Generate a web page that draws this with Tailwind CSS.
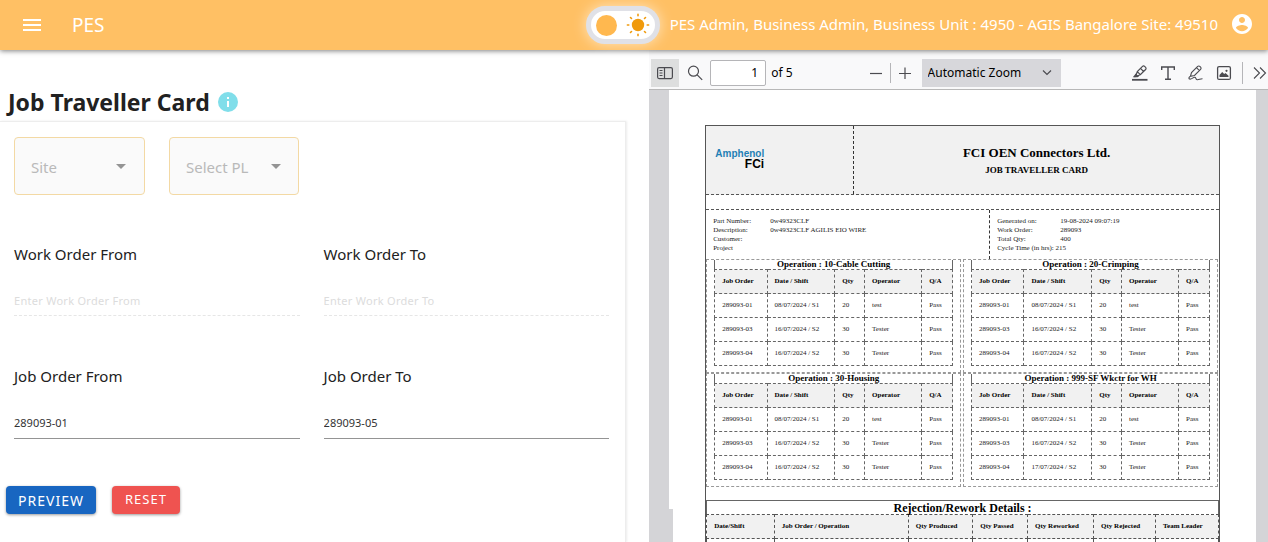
<!DOCTYPE html>
<html lang="en">
<head>
<meta charset="utf-8">
<title>PES - Job Traveller Card</title>
<script src="https://cdn.jsdelivr.net/npm/@tailwindcss/browser@4"></script>
</head>
<body class="h-screen overflow-hidden bg-white flex flex-col font-['Noto_Sans',sans-serif] text-[#212121]">

<header class="h-[50px] shrink-0 bg-[#ffc064] text-white flex items-center pl-5 pr-[14px] relative z-10 shadow-[0_1px_5px_rgba(0,0,0,0.5)]">
  <button class="size-6" aria-label="Menu">
    <svg viewBox="0 0 24 24" class="size-6" fill="currentColor"><path d="M3 18h18v-2H3v2zm0-5h18v-2H3v2zm0-7v2h18V6H3z"/></svg>
  </button>
  <a href="#" class="ml-7 text-[19px] leading-6">PES</a>
  <button role="switch" aria-checked="false" aria-label="Dark mode" class="ml-auto w-[74px] h-[38px] rounded-full border-[5px] border-[#e0e1e7] bg-white shadow-[0_0_14px_rgba(255,255,255,0.6)] flex items-center justify-between px-[5px]">
    <span class="size-[21px] rounded-full bg-[#ffb84f]"></span>
    <svg viewBox="0 0 24 24" class="size-6" fill="#f09a0c"><circle cx="12" cy="12" r="6.2"/><g stroke="#f09a0c" stroke-width="1.6" stroke-linecap="round"><path d="M12 1.4v1.4M12 21.2v1.4M1.4 12h1.4M21.2 12h1.4M4.5 4.5l1 1M18.5 18.500l1 1M4.500 19.500l1-1M18.500 5.500l1-1"/></g></svg>
  </button>
  <span class="ml-[10px] pb-[2px] text-[15px] leading-6 whitespace-nowrap">PES Admin, Business Admin, Business Unit : 4950 - AGIS Bangalore Site: 49510</span>
  <button class="ml-3 size-6 mb-[2px] shrink-0" aria-label="Account">
    <svg viewBox="0 0 24 24" class="size-6" fill="currentColor"><path d="M12 2C6.480 2 2 6.480 2 12s4.480 10 10 10 10-4.480 10-10S17.520 2 12 2zm0 3c1.660 0 3 1.340 3 3s-1.340 3-3 3-3-1.340-3-3 1.340-3 3-3zm0 14.200c-2.500 0-4.710-1.280-6-3.220.030-1.990 4-3.080 6-3.080 1.990 0 5.970 1.090 6 3.080-1.290 1.940-3.500 3.220-6 3.220z"/></svg>
  </button>
</header>

<main class="flex-1 min-h-0 flex">
  <section class="w-[51.2%] shrink-0 pr-[23px] flex flex-col">
    <div class="h-[71px] pt-8 pl-2 flex items-center gap-2">
      <h1 class="text-[23px] leading-8 font-bold">Job Traveller Card</h1>
      <svg viewBox="0 0 20 20" class="size-5" role="img" aria-label="Information"><circle cx="10" cy="10" r="10" fill="#80deea"/><path d="M9 5h2v2H9zM9 9h2v6H9z" fill="#fff"/></svg>
    </div>
    <form class="flex-1 border-t border-r border-[#ededed] shadow-[1px_0_2px_rgba(0,0,0,0.08)] pt-[15px]" onsubmit="return false">
      <div class="flex gap-6 pl-[14px]">
        <div class="relative w-[131px]">
          <select aria-label="Site" class="appearance-none w-full h-[58px] rounded border border-[#f3d9a4] bg-[#fafafa] pl-4 pt-[2px] text-[15px] text-[#b9b9b9]"><option>Site</option></select>
          <svg viewBox="0 0 10 5" class="absolute right-[19px] top-[27px] w-[10px] h-[5px]" fill="#949494"><path d="M0 0h10L5 5z"/></svg>
        </div>
        <div class="relative w-[130px]">
          <select aria-label="Select PL" class="appearance-none w-full h-[58px] rounded border border-[#f3d9a4] bg-[#fafafa] pl-4 pt-[2px] text-[15px] text-[#b9b9b9]"><option>Select PL</option></select>
          <svg viewBox="0 0 10 5" class="absolute right-[18px] top-[27px] w-[10px] h-[5px]" fill="#949494"><path d="M0 0h10L5 5z"/></svg>
        </div>
      </div>
      <div class="grid grid-cols-2 gap-x-6 gap-y-12 pt-[47px] pl-[14px] pr-4">
        <div>
          <label for="wf" class="block text-[15px] leading-6">Work Order From</label>
          <input id="wf" placeholder="Enter Work Order From" disabled class="mt-5 block w-full h-[30px] pb-px border-b border-dashed border-[#e6e6e6] text-[11px] tracking-wide placeholder:text-[#dcdcdc]">
        </div>
        <div>
          <label for="wt" class="block text-[15px] leading-6">Work Order To</label>
          <input id="wt" placeholder="Enter Work Order To" disabled class="mt-5 block w-full h-[30px] pb-px border-b border-dashed border-[#e6e6e6] text-[11px] tracking-wide placeholder:text-[#dcdcdc]">
        </div>
        <div>
          <label for="jf" class="block text-[15px] leading-6">Job Order From</label>
          <input id="jf" value="289093-01" class="mt-[21px] block w-full h-[30px] pb-[2px] border-b border-[#949494] text-[11px] text-[#333]">
        </div>
        <div>
          <label for="jt" class="block text-[15px] leading-6">Job Order To</label>
          <input id="jt" value="289093-05" class="mt-[21px] block w-full h-[30px] pb-[2px] border-b border-[#949494] text-[11px] text-[#333]">
        </div>
      </div>
      <div class="flex gap-4 pt-[47px] pl-[6px]">
        <button class="h-7 w-[90px] rounded bg-[#1866c1] text-white text-[14px] tracking-[1px] shadow-[0_1px_3px_rgba(0,0,0,0.4)]">PREVIEW</button>
        <button class="h-7 w-[68px] rounded bg-[#ef5350] text-white text-[13px] tracking-[1px] shadow-[0_1px_3px_rgba(0,0,0,0.4)]">RESET</button>
      </div>
    </form>
  </section>

  <section class="flex-1 min-w-0 flex flex-col">
    <div class="h-10 shrink-0 bg-[#f9f9fa] border-b border-[#b8b8b8] pt-[6px] pl-[2px] flex items-center text-[13px] text-black overflow-hidden">
      <button class="w-7 h-7 bg-[#dddede] grid place-items-center shrink-0" aria-label="Toggle sidebar">
        <svg viewBox="0 0 16 16" class="size-4" fill="none" stroke="#4b4b50" stroke-width="1.200"><rect x=".6" y="2.600" width="14.800" height="11" rx="1.500"/><path d="M7.500 2.600v11M2.500 5.500h3M2.500 8h3M2.500 10.500h3"/></svg>
      </button>
      <button class="w-[31px] h-7 grid place-items-center shrink-0" aria-label="Find">
        <svg viewBox="0 0 16 16" class="size-4" fill="none" stroke="#4b4b50" stroke-width="1.200"><circle cx="6.500" cy="6.200" r="5"/><path d="M10.200 9.900l5 5"/></svg>
      </button>
      <input aria-label="Page" value="1" class="w-14 h-[26px] shrink-0 border border-[#b5b5b8] rounded-[2px] bg-white text-right text-xs pr-[7px]">
      <span class="ml-[5px] whitespace-nowrap text-xs">of 5</span>
      <button class="ml-[76px] w-[14px] h-7 shrink-0 grid place-items-center" aria-label="Zoom out"><svg viewBox="0 0 12 12" class="size-3" stroke="#4b4b50" stroke-width="1.200"><path d="M0 6.500h12"/></svg></button>
      <span class="ml-[7px] w-px h-5 bg-[#b5b5b8] shrink-0"></span>
      <button class="ml-[7px] w-[14px] h-7 shrink-0 grid place-items-center" aria-label="Zoom in"><svg viewBox="0 0 12 12" class="size-3" stroke="#4b4b50" stroke-width="1.200"><path d="M0 6.500h12M6 .5v12"/></svg></button>
      <div class="relative ml-[10px] w-[139px] shrink-0">
        <select aria-label="Zoom" class="appearance-none w-full h-7 bg-[#d7d7db] pl-[6px] text-xs"><option>Automatic Zoom</option></select>
        <svg viewBox="0 0 10 6" class="absolute right-[9px] top-[11px] w-[10px] h-[6px]" fill="none" stroke="#4b4b50" stroke-width="1.200"><path d="M1 .5l4 4 4-4"/></svg>
      </div>
      <div class="ml-auto flex items-center gap-3 shrink-0 pr-[5px]">
        <button aria-label="Highlight"><svg viewBox="0 0 16 16" class="size-4 block" fill="none" stroke="#4b4b50" stroke-width="1.200"><path d="M0 14.800h15.500" stroke-width="1.800"/><path d="M3.500 11.500l1.800-4.800 5.200-5.300c.6-.6 1.500-.6 2.100 0l1 1c.6.6.6 1.500 0 2.100l-5.300 5.200zM5.300 6.700l3 3M8.500 3.400l3.100 3.100"/><path d="M.8 12.200l3-3.700L7 11.400l-1.500.8z" fill="#4b4b50" stroke="none"/></svg></button>
        <button aria-label="Text"><svg viewBox="0 0 16 16" class="size-4 block" fill="none" stroke="#4b4b50" stroke-width="1.400"><path d="M1.700 5V2h12.600v3M8 2v12M5 14.200h6"/></svg></button>
        <button aria-label="Draw"><svg viewBox="0 0 16 16" class="size-4 block" fill="none" stroke="#4b4b50" stroke-width="1.100"><path d="M2.500 11.200l1-3.700 6.200-6.100c.6-.6 1.500-.6 2.100 0l.8.8c.6.6.6 1.500 0 2.100L6.500 10.500zM8.500 2.700l2.900 2.900M2.500 11.200C1 12 .6 13 1.200 13.800c2 1.400 4-2 5.700-1.600 1.400.4.5 2.400 2.200 2.500 2 .2 3-1 5.400-.9"/></svg></button>
        <button aria-label="Image"><svg viewBox="0 0 16 16" class="size-4 block" fill="none" stroke="#4b4b50" stroke-width="1.300"><rect x="1.600" y="1.600" width="12.800" height="12.800" rx="1.500"/><path d="M3.500 12V10l2.700-3 2 2 1.300-1 3 2.800V12z" fill="#4b4b50" stroke="none"/><circle cx="10.500" cy="5.800" r="1.100" fill="#4b4b50" stroke="none"/></svg></button>
        <span class="-mx-[2px] w-px h-[22px] bg-[#b5b5b8]"></span>
        <button aria-label="More tools" class="-mr-1"><svg viewBox="0 0 14 14" class="size-[14px] block" fill="none" stroke="#4b4b50" stroke-width="1.100"><path d="M1 1.500L6.500 7 1 12.500M7 1.500L12.500 7 7 12.500"/></svg></button>
      </div>
    </div>

    <div class="flex-1 min-h-0 overflow-hidden bg-[#d4d4d7] pl-5 pr-3 relative">
      <div class="absolute left-5 top-[419px] bottom-0 w-1 bg-[#d4d4d7]"></div>
      <article class="bg-white h-full pt-[35px] pl-9 pr-9 font-['Liberation_Serif',serif] text-[7px] leading-[9px] text-[#222]">
        <div class="border border-[#555] h-[700px]">
          <div class="flex h-[69px] bg-[#f1f1f1] border-b border-dashed border-[#555]">
            <div class="w-[148px] border-r border-dashed border-[#333] pt-[23px] pl-2 font-['Liberation_Sans',sans-serif] font-bold">
              <div class="w-[50px] text-right text-[10px] leading-[10px] text-[#1f7fb5]">Amphenol</div>
              <div class="w-[50px] text-right text-[12px] leading-[11px] text-black">FCi</div>
            </div>
            <div class="flex-1 text-center text-black font-bold pt-[18px]">
              <h2 class="text-[13px] leading-[18px]">FCI OEN Connectors Ltd.</h2>
              <h3 class="text-[9px] leading-4">JOB TRAVELLER CARD</h3>
            </div>
          </div>
          <div class="h-[15px] border-b border-dashed border-[#555]"></div>
          <div class="flex h-[49px]">
            <dl class="w-[284px] border-r border-dashed border-[#333] grid grid-cols-[57px_1fr] content-start pl-[7px] pt-[7px]">
              <dt>Part Number:</dt><dd>0w49323CLF</dd>
              <dt>Description:</dt><dd>0w49323CLF AGILIS EIO WIRE</dd>
              <dt>Customer:</dt><dd></dd>
              <dt>Project</dt><dd></dd>
            </dl>
            <dl class="flex-1 grid grid-cols-[63px_1fr] content-start pl-[7px] pt-[7px] whitespace-nowrap">
              <dt>Generated on:</dt><dd>19-08-2024 09:07:19</dd>
              <dt>Work Order:</dt><dd>289093</dd>
              <dt>Total Qty:</dt><dd>400</dd>
              <dt>Cycle Time (in hrs): 215</dt><dd></dd>
            </dl>
          </div>
          <div id="ops" class="grid grid-cols-2 gap-x-[2px] pr-px"></div>
          <table class="mt-[13px] w-full table-fixed border-collapse">
            <caption class="border border-b-0 border-[#666] h-[14px] text-[12px] leading-[14px] font-bold text-black">Rejection/Rework Details :</caption>
            <colgroup><col class="w-[13.200%]"><col class="w-[26.200%]"><col class="w-[12.600%]"><col class="w-[10.700%]"><col class="w-[12.900%]"><col class="w-[12.100%]"><col></colgroup>
            <thead><tr class="h-6 bg-[#f1f1f1] text-black text-left whitespace-nowrap">
              <th class="border border-dashed border-[#555] pl-[7px]">Date/Shift</th>
              <th class="border border-dashed border-[#555] pl-[7px]">Job Order / Operation</th>
              <th class="border border-dashed border-[#555] pl-[7px]">Qty Produced</th>
              <th class="border border-dashed border-[#555] pl-[7px]">Qty Passed</th>
              <th class="border border-dashed border-[#555] pl-[7px]">Qty Reworked</th>
              <th class="border border-dashed border-[#555] pl-[7px]">Qty Rejected</th>
              <th class="border border-dashed border-[#555] pl-[7px]">Team Leader</th>
            </tr></thead>
            <tbody><tr class="h-6">
              <td class="border border-dashed border-[#555]"></td><td class="border border-dashed border-[#555]"></td><td class="border border-dashed border-[#555]"></td><td class="border border-dashed border-[#555]"></td><td class="border border-dashed border-[#555]"></td><td class="border border-dashed border-[#555]"></td><td class="border border-dashed border-[#555]"></td>
            </tr></tbody>
          </table>
        </div>
      </article>
    </div>
  </section>
</main>

<script>
const operations = [
  ['10-Cable Cutting', '16/07/2024 / S2'],
  ['20-Crimping', '16/07/2024 / S2'],
  ['30-Housing', '16/07/2024 / S2'],
  ['999-SF Wkctr for WH', '17/07/2024 / S2'],
];
const cell = t => `<td class="border border-dashed border-[#666] pl-[7px]">${t}</td>`;
const head = t => `<th class="border border-dashed border-[#666] pl-[7px]">${t}</th>`;
document.getElementById('ops').innerHTML = operations.map(([name, last]) => {
  const rows = [
    ['289093-01', '08/07/2024 / S1', '20', 'test', 'Pass'],
    ['289093-03', '16/07/2024 / S2', '30', 'Tester', 'Pass'],
    ['289093-04', last, '30', 'Tester', 'Pass'],
  ];
  return `<div class="h-[114px] border border-dashed border-[#999] px-[7px]">
    <table class="w-full table-fixed border-collapse whitespace-nowrap">
      <caption class="h-[9px] border-x border-[#666] text-[9px] leading-[9px] font-bold text-black">Operation : ${name}</caption>
      <colgroup><col class="w-[22%]"><col class="w-[28.500%]"><col class="w-[12.500%]"><col class="w-[24%]"><col></colgroup>
      <thead><tr class="h-6 bg-[#f1f1f1] text-black text-left">${['Job Order', 'Date / Shift', 'Qty', 'Operator', 'Q/A'].map(head).join('')}</tr></thead>
      <tbody>${rows.map(r => `<tr class="h-6">${r.map(cell).join('')}</tr>`).join('')}</tbody>
    </table></div>`;
}).join('');
</script>
</body>
</html>
